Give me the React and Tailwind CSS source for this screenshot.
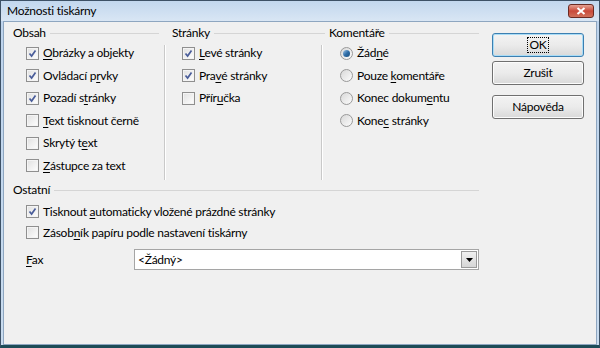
import React from 'react';

const font = { fontFamily: 'Lato, "Noto Sans", sans-serif' };

// label text with an underlined access key
const Label = ({ text, u }) => {
  if (u == null) return <span>{text}</span>;
  return (
    <span>
      {text.slice(0, u)}
      <span className="underline underline-offset-2">{text[u]}</span>
      {text.slice(u + 1)}
    </span>
  );
};

const Check = ({ checked }) => (
  <span className="w-[13px] h-[13px] border border-[#8f8f8f] bg-gradient-to-br from-[#dcdcdc] to-[#fbfbfb] flex items-center justify-center shrink-0">
    <span className="w-[11px] h-[11px] border border-[#f4f4f4] bg-gradient-to-br from-[#e3e3e3] to-[#fcfcfc] flex items-center justify-center">
      {checked && (
        <svg width="9" height="9" viewBox="0 0 9 9">
          <path d="M1.5 4.5 L3.6 7 L7.5 1.5" fill="none" stroke="#4a5d9a" strokeWidth="1.7" />
        </svg>
      )}
    </span>
  </span>
);

const Radio = ({ checked }) => (
  <span className="w-[13px] h-[13px] rounded-full border border-[#999] bg-gradient-to-br from-[#d8d8d8] to-[#fcfcfc] flex items-center justify-center shrink-0">
    {checked && (
      <span className="w-[7px] h-[7px] rounded-full bg-gradient-to-br from-[#9ec6e6] via-[#2f6ea8] to-[#1b4f7e]" />
    )}
  </span>
);

const Row = ({ children, label, h = 'h-[22.5px]' }) => (
  <div className={h + ' flex items-center gap-[4px]'}>
    {children}
    <Label {...label} />
  </div>
);

const Heading = ({ text, right = 0 }) => (
  <div className="h-[16px] flex items-center" style={{ marginRight: right }}>
    <span>{text}</span>
    <span className="flex-1 h-px bg-[#d5d5d5] ml-[4px]" />
  </div>
);

const Button = ({ children, focused }) => (
  <div
    className={
      'w-[92px] h-[24px] rounded-[3px] border flex items-center justify-center bg-gradient-to-b from-[#f3f3f3] via-[#ebebeb] to-[#d9d9d9] ' +
      (focused ? 'border-[#3c7fb1] shadow-[inset_0_0_0_1px_#a9dcf6]' : 'border-[#707070] shadow-[inset_0_0_0_1px_#fcfcfc]')
    }
  >
    {focused ? (
      <span className="border border-dotted border-black px-[1px] leading-[14px]">{children}</span>
    ) : (
      children
    )}
  </div>
);

const obsah = [
  { checked: true, text: 'Obrázky a objekty', u: 0 },
  { checked: true, text: 'Ovládací prvky', u: 10 },
  { checked: true, text: 'Pozadí stránky', u: 8 },
  { checked: false, text: 'Text tisknout černě', u: 0 },
  { checked: false, text: 'Skrytý text', u: 8 },
  { checked: false, text: 'Zástupce za text', u: 0 },
];

const stranky = [
  { checked: true, text: 'Levé stránky', u: 0 },
  { checked: true, text: 'Pravé stránky', u: 3 },
  { checked: false, text: 'Příručka', u: 4 },
];

const komentare = [
  { checked: true, text: 'Žádné', u: 3 },
  { checked: false, text: 'Pouze komentáře', u: 6 },
  { checked: false, text: 'Konec dokumentu', u: 11 },
  { checked: false, text: 'Konec stránky', u: 4 },
];

export default function App() {
  return (
    <div
      className="w-[600px] h-[348px] bg-gradient-to-b from-[#bdd3ec] to-[#c9dcef] border border-[#3d5166] border-b-[3px] border-b-[#1d4c57] flex flex-col text-[12px] tracking-[-0.25px] text-black"
      style={font}
    >
      <div className="h-[20px] flex items-center justify-between pl-[6px] pr-[5px] bg-gradient-to-b from-[#c2d7ee] to-[#d9e6f4]">
        <span>Možnosti tiskárny</span>
        <div className="w-[26px] h-[14px] rounded-[3px] border border-[#6b2a22] bg-gradient-to-b from-[#e4a092] via-[#c9493a] to-[#d0705a] flex items-center justify-center">
          <svg width="10" height="8" viewBox="0 0 10 8">
            <path d="M1.5 1 L8.5 7 M8.5 1 L1.5 7" stroke="white" strokeWidth="2" />
          </svg>
        </div>
      </div>
      <div className="flex-1 ml-[2px] mr-[2px] bg-[#f0f0f0] border border-[#8ea6c0] flex flex-col pt-[3px] pl-[9px]">
        <div className="flex">
          {/* Obsah */}
          <div className="w-[159px]">
            <Heading text="Obsah" right={13} />
            <div className="flex">
              <div className="w-[151px] pl-[13px] pt-[1px]">
                {obsah.map((o) => (
                  <Row key={o.text} label={o}>
                    <Check checked={o.checked} />
                  </Row>
                ))}
              </div>
              <div className="w-px mt-[4px] h-[135px] bg-[#c9c9c9] shadow-[1px_0_0_#fff]" />
            </div>
          </div>
          {/* Stránky */}
          <div className="w-[157px]">
            <Heading text="Stránky" right={4} />
            <div className="flex">
              <div className="w-[149px] pl-[10px] pt-[1px]">
                {stranky.map((o) => (
                  <Row key={o.text} label={o}>
                    <Check checked={o.checked} />
                  </Row>
                ))}
              </div>
              <div className="w-px mt-[4px] h-[135px] bg-[#c9c9c9] shadow-[1px_0_0_#fff]" />
            </div>
          </div>
          {/* Komentáře */}
          <div className="w-[150px]">
            <Heading text="Komentáře" />
            <div className="pl-[11px] pt-[1px]">
              {komentare.map((o) => (
                <Row key={o.text} label={o}>
                  <Radio checked={o.checked} />
                </Row>
              ))}
            </div>
          </div>
          {/* buttons */}
          <div className="ml-[13px] pt-[8px] flex flex-col">
            <Button focused>OK</Button>
            <div className="mt-[4px]">
              <Button>Zrušit</Button>
            </div>
            <div className="mt-[10px]">
              <Button>Nápověda</Button>
            </div>
          </div>
        </div>

        {/* Ostatní */}
        <div className="w-[466px] mt-[2px]">
          <Heading text="Ostatní" />
          <div className="pl-[13px] pt-[3px]">
            <Row h="h-[21px]" label={{ text: 'Tisknout automaticky vložené prázdné stránky', u: 9 }}>
              <Check checked />
            </Row>
            <Row h="h-[21px]" label={{ text: 'Zásobník papíru podle nastavení tiskárny', u: 5 }}>
              <Check />
            </Row>
            <div className="flex items-center mt-[6px]">
              <span className="w-[108px]">
                <Label text="Fax" u={0} />
              </span>
              <div className="flex-1 h-[21px] bg-white border border-[#a5a5a5] flex items-center justify-between pl-[3px] pr-[1px]">
                <span>&lt;Žádný&gt;</span>
                <div className="w-[16px] h-[17px] border border-[#9a9a9a] bg-gradient-to-b from-[#f0f0f0] to-[#d6d6d6] flex items-center justify-center">
                  <svg width="7" height="4" viewBox="0 0 7 4">
                    <path d="M0 0 H7 L3.5 4 Z" fill="#000" />
                  </svg>
                </div>
              </div>
            </div>
          </div>
        </div>
      </div>
    </div>
  );
}
